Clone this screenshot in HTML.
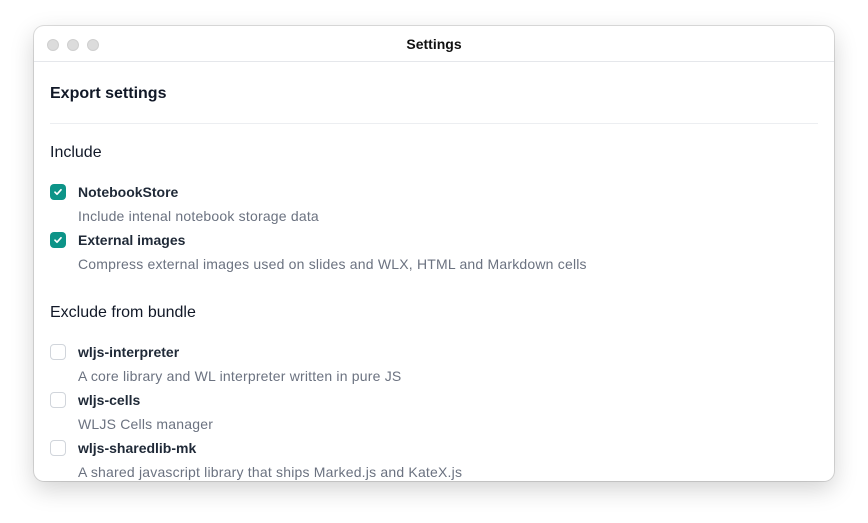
<!DOCTYPE html>
<html><head><meta charset="utf-8"><style>
*{margin:0;padding:0;box-sizing:border-box}
html,body{width:868px;height:523px;background:#fff;overflow:hidden;font-family:"Liberation Sans",sans-serif}
.win{position:absolute;left:34px;top:26px;width:800px;height:455px;border-radius:10px;background:#fff;box-shadow:0 0 0 1px rgba(0,0,0,0.12),0 8px 24px rgba(0,0,0,0.18);overflow:hidden}
.tb{position:absolute;left:0;top:0;width:800px;height:36px;border-bottom:1px solid #e5e7eb}
.dot{position:absolute;top:13px;width:12px;height:12px;border-radius:50%;background:#dcdcdc;border:1px solid #cfcfcf}
.title{position:absolute;left:0;width:800px;top:10px;text-align:center;font-size:14px;font-weight:bold;color:#111}
.t{position:absolute;white-space:nowrap}
.h{font-size:16px;font-weight:bold;color:#111827}
.s{font-size:16px;color:#111827}
.l{font-size:14px;font-weight:bold;color:#1f2937;left:44px}
.d{font-size:14px;color:#6b7280;left:44px;letter-spacing:0.2px}
.cb{position:absolute;left:16px;width:16px;height:16px;border-radius:4px}
.on{background:#0d9488}
.off{border:1px solid #d1d5db;background:#fff}
.cb svg{position:absolute;left:3px;top:3px}
</style></head><body>
<div class="win">
<div class="tb">
<div class="dot" style="left:13px"></div><div class="dot" style="left:33px"></div><div class="dot" style="left:53px"></div>
<div class="title">Settings</div>
</div>
<div class="t h" style="left:16px;top:59px">Export settings</div>
<div style="position:absolute;left:16px;top:97px;width:768px;height:1px;background:#eceef1"></div>
<div class="t s" style="left:16px;top:118px">Include</div>

<div class="cb on" style="top:158px"><svg width="10" height="10" viewBox="0 0 10 10"><path d="M2 5.2L4 7.2L8 2.8" stroke="#fff" stroke-width="1.7" fill="none" stroke-linecap="round" stroke-linejoin="round"/></svg></div>
<div class="t l" style="top:158px">NotebookStore</div>
<div class="t d" style="top:182px">Include intenal notebook storage data</div>
<div class="cb on" style="top:206px"><svg width="10" height="10" viewBox="0 0 10 10"><path d="M2 5.2L4 7.2L8 2.8" stroke="#fff" stroke-width="1.7" fill="none" stroke-linecap="round" stroke-linejoin="round"/></svg></div>
<div class="t l" style="top:206px">External images</div>
<div class="t d" style="top:230px">Compress external images used on slides and WLX, HTML and Markdown cells</div>

<div class="t s" style="left:16px;top:278px">Exclude from bundle</div>
<div class="cb off" style="top:318px"></div>
<div class="t l" style="top:318px">wljs-interpreter</div>
<div class="t d" style="top:342px">A core library and WL interpreter written in pure JS</div>
<div class="cb off" style="top:366px"></div>
<div class="t l" style="top:366px">wljs-cells</div>
<div class="t d" style="top:390px">WLJS Cells manager</div>
<div class="cb off" style="top:414px"></div>
<div class="t l" style="top:414px">wljs-sharedlib-mk</div>
<div class="t d" style="top:438px">A shared javascript library that ships Marked.js and KateX.js</div>
</div>
</body></html>
